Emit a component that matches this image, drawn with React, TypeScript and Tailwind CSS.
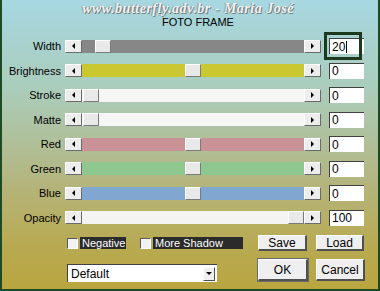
const rows = [
  { label: "Width", track: "bg-[#878787]", thumb: 13, value: "20", focus: true },
  { label: "Brightness", track: "bg-[#c9c830]", thumb: 103, value: "0" },
  { label: "Stroke", track: "bg-[#f6f6f4]", thumb: 1, value: "0" },
  { label: "Matte", track: "bg-[#f6f6f4]", thumb: 1, value: "0" },
  { label: "Red", track: "bg-[#c99297]", thumb: 103, value: "0" },
  { label: "Green", track: "bg-[#8fc88f]", thumb: 103, value: "0" },
  { label: "Blue", track: "bg-[#7fa7cf]", thumb: 103, value: "0" },
  { label: "Opacity", track: "bg-[#f4f4f2]", thumb: 206, value: "100" },
];

function ArrowButton({ dir }: { dir: "left" | "right" }) {
  return (
    <div className="flex h-[13px] w-[17px] items-center justify-center border-t border-l border-t-white border-l-white border-r border-b border-r-[#6a6a6a] border-b-[#6a6a6a] bg-[#ededed]">
      {dir === "left" ? (
        <div className="h-0 w-0 border-y-[3px] border-r-[3px] border-y-transparent border-r-black" />
      ) : (
        <div className="h-0 w-0 border-y-[3px] border-l-[3px] border-y-transparent border-l-black" />
      )}
    </div>
  );
}

function Row({ r }: { r: (typeof rows)[number] }) {
  return (
    <div className="flex h-[24.5px] items-center">
      <div className="w-[59px] text-right text-[11px] text-black">{r.label}</div>
      <div className="ml-[4px] flex items-center">
        <ArrowButton dir="left" />
        <div className={`flex h-[13px] w-[222px] items-center ${r.track}`}>
          <div style={{ width: r.thumb }} className="h-full shrink-0" />
          <div className="h-[13px] w-[16px] shrink-0 border-t border-l border-t-white border-l-white border-r border-b border-r-[#7a7a7a] border-b-[#7a7a7a] bg-[#e9e9e9]" />
        </div>
        <ArrowButton dir="right" />
      </div>
      <div className="relative ml-[8px]">
        {r.focus && (
          <div className="absolute left-[-5px] top-[-6px] h-[28px] w-[38px] border-[3px] border-[#1e3a1e]" />
        )}
        <div className="flex h-[16px] w-[35px] items-center border-t border-l border-t-[#404040] border-l-[#404040] bg-white pl-[2px] text-[12px] leading-none text-black">
          {r.value}
          {r.focus && <span className="ml-[1px] h-[12px] w-px bg-black" />}
        </div>
      </div>
    </div>
  );
}

function Check({ label, w }: { label: string; w: string }) {
  return (
    <div className="flex items-center">
      <div className="h-[11px] w-[11px] border-t border-l border-t-[#5a5a5a] border-l-[#5a5a5a] border-r border-b border-r-white border-b-white bg-[#f2f2f2]" />
      <div className={`ml-[2px] flex h-[12px] items-center bg-[#2b2b2b] pl-[2px] text-[11px] leading-none text-white ${w}`}>
        {label}
      </div>
    </div>
  );
}

function Btn({ label, w, h, def }: { label: string; w: string; h: string; def?: boolean }) {
  return (
    <div
      className={`flex items-center justify-center border-t border-l border-t-white border-l-white border-r-2 border-b-2 border-r-[#505050] border-b-[#505050] bg-[#efefef] text-[12px] leading-none text-black ${w} ${h} ${def ? "outline outline-1 outline-[#6a6a6a]" : ""}`}
    >
      {label}
    </div>
  );
}

export default function App() {
  return (
    <div className="h-[291px] w-[380px] overflow-hidden border-x-2 border-b-2 border-[#1d4a22] bg-[linear-gradient(180deg,#a7d7e1_0%,#aacdbc_30%,#afc09c_48%,#b4b47a_65%,#b8aa52_85%,#b9a640_100%)] font-['Liberation_Sans',Arial,sans-serif]">
      <div className="flex flex-col items-center pt-[1px]">
        <div className="ml-[-4px] font-['Liberation_Serif',serif] text-[14px] font-bold italic leading-[16px] tracking-[0.5px] text-[#f2f2f2] [text-shadow:1px_1px_0_#6f7f80,-1px_0_0_#8a9a9c]">
          www.butterfly.adv.br - Maria José
        </div>
        <div className="ml-[16px] text-[11px] leading-[11px] text-black">FOTO FRAME</div>
      </div>
      <div className="mt-[6px] flex flex-col">
        {rows.map((r) => (
          <Row key={r.label} r={r} />
        ))}
      </div>
      <div className="mt-[5px] flex pl-[65px]">
        <div className="flex w-[191px] flex-col">
          <div className="flex h-[16px] items-center gap-[5px]">
            <Check label="Negative" w="w-[46px]" />
            <div className="ml-[9px]">
              <Check label="More Shadow" w="w-[90px]" />
            </div>
          </div>
          <div className="mt-[13px] flex h-[18px] w-[150px] items-center justify-between border-t border-l border-t-[#404040] border-l-[#404040] bg-white pl-[3px] pr-[2px] text-[12px] leading-none text-black">
            Default
            <div className="flex h-[14px] w-[12px] items-center justify-center border-t border-l border-t-white border-l-white border-r border-b border-r-[#505050] border-b-[#505050] bg-[#efefef]">
              <div className="h-0 w-0 border-x-[3px] border-t-[3px] border-x-transparent border-t-black" />
            </div>
          </div>
        </div>
        <div className="flex flex-col gap-[8px]">
          <div className="flex gap-[9px]">
            <Btn label="Save" w="w-[49px]" h="h-[16px]" />
            <Btn label="Load" w="w-[48px]" h="h-[16px]" />
          </div>
          <div className="flex gap-[8px]">
            <Btn label="OK" w="w-[50px]" h="h-[22px]" def />
            <Btn label="Cancel" w="w-[49px]" h="h-[22px]" />
          </div>
        </div>
      </div>
    </div>
  );
}
